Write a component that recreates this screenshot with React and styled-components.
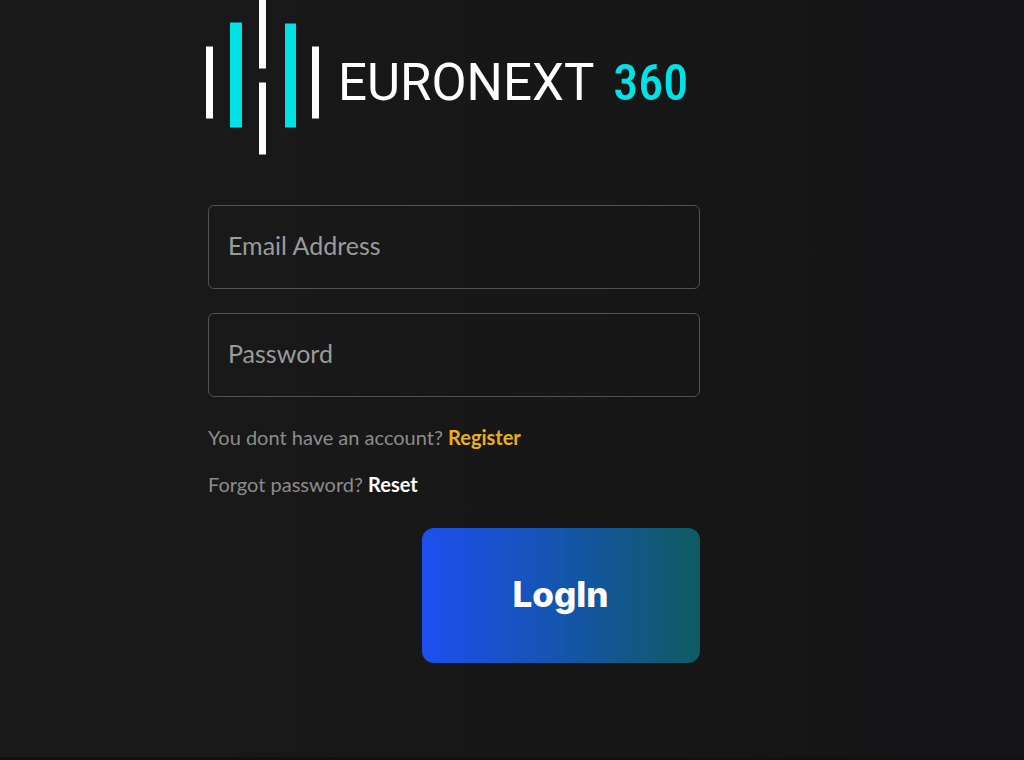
import React from "react";
import styled, { createGlobalStyle } from "styled-components";

const GlobalStyle = createGlobalStyle`
  *, *::before, *::after { box-sizing: border-box; }
  body {
    margin: 0;
    background: #171717;
    font-family: Lato, "Open Sans", sans-serif;
  }
`;

const Page = styled.div`
  display: flex;
  flex-direction: column;
  min-height: 100vh;
  background: linear-gradient(to right, #1a1a1a, #171717 50%, #141416);
  border-bottom: 3px solid #170e11;
`;

const Panel = styled.main`
  width: 48%;
  min-width: 320px;
  margin-left: 208px;
`;

const Brand = styled.h1`
  display: flex;
  align-items: flex-start;
  margin: 0 0 45px -4px;
  height: 160px;
  font-weight: 400;
  white-space: nowrap;
`;

const Mark = styled.svg`
  flex: none;
  display: block;
  width: 132px;
  height: 160px;
`;

const BrandName = styled.span`
  padding: 51px 0 0 2px;
  font-family: Roboto, sans-serif;
  font-size: 51px;
  line-height: 64px;
  color: #fff;
`;

const BrandNumber = styled.span`
  padding: 51px 0 0 19px;
  font-family: "Roboto Condensed", Roboto, sans-serif;
  font-size: 50px;
  font-weight: 500;
  line-height: 64px;
  color: #00e2e6;
`;

const Form = styled.form`
  display: flex;
  flex-direction: column;
`;

const Field = styled.input`
  width: 100%;
  height: 84px;
  margin-bottom: 24px;
  padding: 0 19px 4px;
  border: 1px solid #505252;
  border-radius: 6px;
  background: transparent;
  color: #fff;
  font-family: inherit;
  font-size: 25px;
  &::placeholder { color: #9b9b9b; opacity: 1; }
`;

const Hint = styled.p`
  margin: 0 0 15px;
  font-size: 20px;
  line-height: 32px;
  white-space: nowrap;
  color: #8c8c8c;
`;

const HintLink = styled.a`
  color: ${(p) => p.$color};
  font-weight: 700;
  text-decoration: none;
`;

const Submit = styled.button`
  align-self: flex-end;
  width: 278px;
  height: 135px;
  margin-top: 13px;
  padding: 0 0 4px;
  border: 0;
  border-radius: 12px;
  background: linear-gradient(to right, #1d4ff0, #1455ad 50%, #0e5b60);
  color: #fff;
  font-family: Inter, sans-serif;
  font-size: 35px;
  font-weight: 800;
  cursor: pointer;
`;

export default function App() {
  return (
    <>
      <GlobalStyle />
      <Page>
        <Panel>
          <Brand>
            <Mark viewBox="0 0 132 160" aria-hidden="true">
              <g fill="#fff">
                <rect x="2" y="46.5" width="7" height="72" />
                <rect x="55" y="0" width="7" height="68.5" />
                <rect x="55" y="82.5" width="7" height="72" />
                <rect x="108" y="46.5" width="7" height="72" />
              </g>
              <g fill="#00e2e6">
                <rect x="26" y="22.5" width="12" height="105" />
                <rect x="81" y="23.5" width="11" height="104" />
              </g>
            </Mark>
            <BrandName>EURONEXT</BrandName>
            <BrandNumber>360</BrandNumber>
          </Brand>
          <Form onSubmit={(e) => e.preventDefault()}>
            <Field type="email" aria-label="Email Address" placeholder="Email Address" />
            <Field type="password" aria-label="Password" placeholder="Password" />
            <Hint>
              You dont have an account? <HintLink href="#register" $color="#e8b116">Register</HintLink>
            </Hint>
            <Hint>
              Forgot password? <HintLink href="#reset" $color="#fff">Reset</HintLink>
            </Hint>
            <Submit type="submit">LogIn</Submit>
          </Form>
        </Panel>
      </Page>
    </>
  );
}
